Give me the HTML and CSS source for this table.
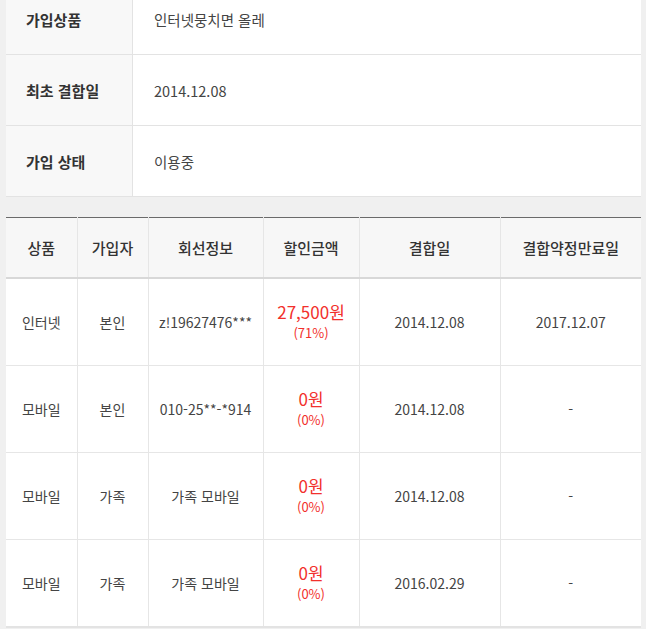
FILE: index.html
```html
<!DOCTYPE html>
<html lang="ko">
<head>
<meta charset="utf-8">
<link rel="stylesheet" href="styles.css">
</head>
<body>
<div class="page">
  <table class="info">
    <tr><th>가입상품</th><td>인터넷뭉치면 올레</td></tr>
    <tr><th>최초 결합일</th><td>2014.12.08</td></tr>
    <tr><th>가입 상태</th><td>이용중</td></tr>
  </table>
  <table class="list">
    <colgroup>
      <col class="c1"><col class="c2"><col class="c3"><col class="c4"><col class="c5"><col class="c6">
    </colgroup>
    <thead>
      <tr><th>상품</th><th>가입자</th><th>회선정보</th><th>할인금액</th><th>결합일</th><th>결합약정만료일</th></tr>
    </thead>
    <tbody>
      <tr><td>인터넷</td><td>본인</td><td>z!19627476***</td><td><span class="amt">27,500원</span><span class="pct">(71%)</span></td><td>2014.12.08</td><td>2017.12.07</td></tr>
      <tr><td>모바일</td><td>본인</td><td>010-25**-*914</td><td><span class="amt">0원</span><span class="pct">(0%)</span></td><td>2014.12.08</td><td>-</td></tr>
      <tr><td>모바일</td><td>가족</td><td>가족 모바일</td><td><span class="amt">0원</span><span class="pct">(0%)</span></td><td>2014.12.08</td><td>-</td></tr>
      <tr><td>모바일</td><td>가족</td><td>가족 모바일</td><td><span class="amt">0원</span><span class="pct">(0%)</span></td><td>2016.02.29</td><td>-</td></tr>
    </tbody>
  </table>
</div>
</body>
</html>
```

FILE: styles.css
```css
html, body {
  margin: 0;
  padding: 0;
  background: #f0f0f0;
}
body {
  font-family: "Noto Sans CJK KR", "Noto Sans", sans-serif;
  color: #333;
}
.page {
  margin: -16px 5px 0 6px;
}
table {
  border-collapse: collapse;
  width: 100%;
  table-layout: fixed;
  background: #fff;
}
.info th, .info td {
  height: 70px;
  padding: 0;
  border-bottom: 1px solid #e3e3e3;
  font-size: 15px;
  text-align: left;
  vertical-align: middle;
}
.info th {
  width: 106px;
  padding-left: 20px;
  background: #f8f8f8;
  border-right: 1px solid #e3e3e3;
  font-weight: 700;
  color: #333;
}
.info td {
  padding-left: 21px;
  color: #444;
  font-size: 14.5px;
}
.list {
  margin-top: 20px;
  border-top: 1px solid #6a6a6a;
  border-bottom: 2px solid #e3e3e3;
}
.list .c1 { width: 71px; }
.list .c2 { width: 71px; }
.list .c3 { width: 115px; }
.list .c4 { width: 96px; }
.list .c5 { width: 141px; }
.list .c6 { width: auto; }
.list th, .list td {
  padding: 0;
  text-align: center;
  vertical-align: middle;
  border-left: 1px solid #e6e6e6;
}
.list th:first-child, .list td:first-child {
  border-left: none;
}
.list thead th {
  height: 59px;
  background: #f7f7f7;
  font-weight: 500;
  font-size: 15px;
  color: #333;
  border-bottom: 2px solid #d8d8d8;
}
.list tbody td {
  height: 86px;
  font-size: 14px;
  color: #444;
  border-top: 1px solid #e6e6e6;
}
.list tbody tr:first-child td {
  border-top: none;
}
.amt {
  display: block;
  color: #f2302c;
  font-size: 17px;
  line-height: 22px;
}
.pct {
  display: block;
  color: #f2302c;
  font-size: 13px;
  line-height: 20px;
}
```
